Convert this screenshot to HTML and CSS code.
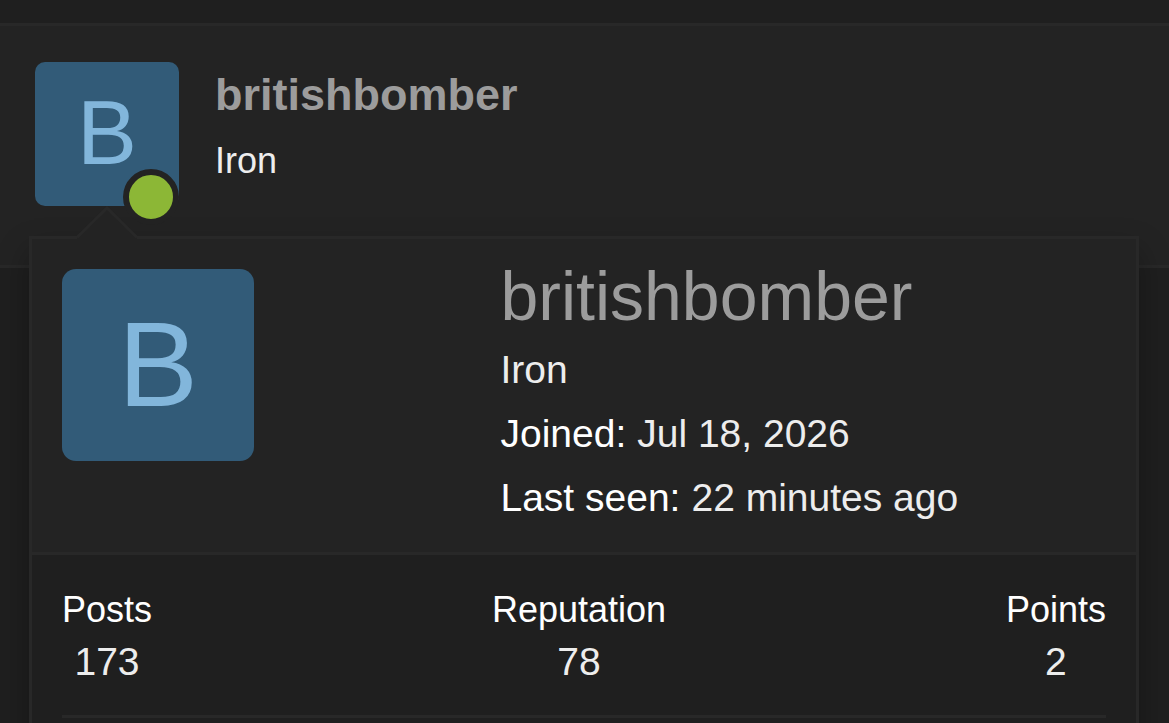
FILE: index.html
```html
<!DOCTYPE html>
<html lang="en">
<head>
<meta charset="utf-8">
<meta name="viewport" content="width=device-width, initial-scale=1">
<title>britishbomber</title>
<link rel="stylesheet" href="styles.css">
</head>
<body>
<main class="page">
  <article class="member-row">
    <a class="avatar avatar-small" href="#member" aria-label="britishbomber, online">B<span class="online"></span></a>
    <div class="member-text">
      <a class="member-name" href="#member">britishbomber</a>
      <div class="member-title">Iron</div>
    </div>
  </article>
  <section class="tooltip" id="member">
    <svg class="tooltip-arrow" viewBox="0 0 60 33" aria-hidden="true">
      <path class="arrow-fill" d="M0 33V31.500L30 2L60 31.500V33Z"/>
      <path class="arrow-line" d="M0 31.500L30 2L60 31.500"/>
    </svg>
    <div class="tooltip-header">
      <a class="avatar avatar-large" href="#member">B</a>
      <div class="tooltip-info">
        <h1 class="tooltip-name"><a href="#member">britishbomber</a></h1>
        <p class="blurb">Iron</p>
        <dl class="blurb"><dt>Joined:</dt><dd>Jul 18, 2026</dd></dl>
        <dl class="blurb"><dt>Last seen:</dt><dd>22 minutes ago</dd></dl>
      </div>
    </div>
    <div class="tooltip-body">
      <div class="stats">
        <dl class="stat"><dt>Posts</dt><dd>173</dd></dl>
        <dl class="stat"><dt>Reputation</dt><dd>78</dd></dl>
        <dl class="stat"><dt>Points</dt><dd>2</dd></dl>
      </div>
      <hr class="divider">
    </div>
  </section>
</main>
</body>
</html>
```
FILE: styles.css
```css
* { box-sizing: border-box; }

body {
  margin: 0;
  background: #1f1f1f;
  color: #ededed;
  font-family: "Liberation Sans", Arial, sans-serif;
}

a { color: inherit; text-decoration: none; }
p, dl, dd, h1 { margin: 0; }

.page {
  position: relative;
  min-height: 100vh;
  padding-top: 23px;
  overflow: hidden;
}

.member-row {
  display: flex;
  gap: 36px;
  padding: 36px 35px 59px;
  background: #232323;
  border-top: 3px solid #282828;
  border-bottom: 3px solid #282828;
}

.avatar {
  display: flex;
  align-items: center;
  justify-content: center;
  background: #325b78;
  color: #82b6db;
  line-height: 1;
}

.avatar-small {
  position: relative;
  width: 144px;
  height: 144px;
  padding-bottom: 3px;
  border-radius: 10px;
  font-size: 90px;
}

.avatar-large {
  width: 192px;
  height: 192px;
  padding-bottom: 2px;
  border-radius: 14px;
  font-size: 120px;
}

.online {
  position: absolute;
  right: 0;
  bottom: -19px;
  width: 56px;
  height: 56px;
  background: #8cb736;
  border: 6px solid #232323;
  border-radius: 50%;
}

.member-text { padding-top: 2px; }

.member-name {
  display: block;
  color: #9c9c9c;
  font-size: 45px;
  font-weight: 700;
  line-height: 62px;
}

.member-title {
  padding-top: 10px;
  font-size: 36px;
  line-height: 50px;
}

.tooltip {
  position: absolute;
  top: 236px;
  right: 30px;
  bottom: -30px;
  left: 29px;
  background: #1f1f1f;
  border: 3px solid #282828;
  box-shadow: 0 15px 30px rgba(0, 0, 0, 0.3);
}

.tooltip-arrow {
  position: absolute;
  top: -33px;
  left: 45px;
  width: 60px;
  height: 33px;
}

.arrow-fill { fill: #232323; }
.arrow-line { fill: none; stroke: #282828; stroke-width: 3; }

.tooltip-header {
  display: grid;
  grid-template-columns: 21fr 29fr;
  padding: 30px 30px 18px;
  background: #232323;
  border-bottom: 3px solid #282828;
}

.tooltip-name {
  color: #9c9c9c;
  font-size: 68px;
  font-weight: 400;
  line-height: 55px;
  padding-bottom: 18px;
}

.blurb {
  display: flex;
  gap: 11px;
  font-size: 39px;
  line-height: 55px;
  padding-bottom: 9px;
}

.blurb dt { color: #ffffff; }

.tooltip-body { padding: 30px; }

.stats {
  display: flex;
  justify-content: space-between;
  padding-bottom: 26px;
}

.stat { text-align: center; }

.stat dt {
  color: #ffffff;
  font-size: 36px;
  line-height: 50px;
}

.stat dd {
  font-size: 39px;
  line-height: 54px;
}

.divider {
  margin: 0;
  border: 0;
  border-top: 3px solid #282828;
}
```
